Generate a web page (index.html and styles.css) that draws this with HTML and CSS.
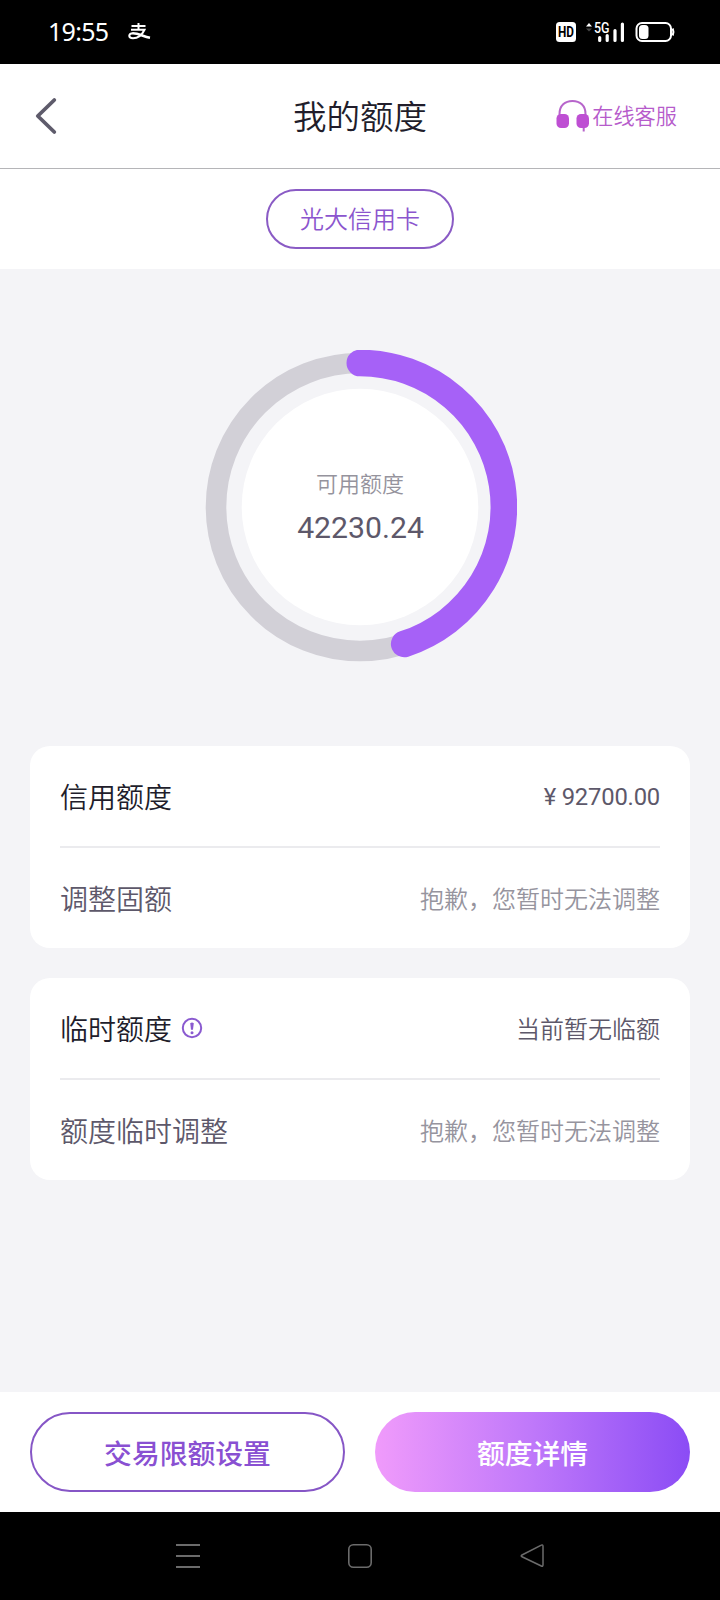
FILE: index.html
```html
<!DOCTYPE html>
<html lang="zh-CN">
<head>
<meta charset="utf-8">
<title>我的额度</title>
<link rel="stylesheet" href="styles.css">
</head>
<body>
<div class="status">
  <span class="time">19:55</span>
  <svg class="pay" width="24" height="20" viewBox="0 0 24 20" fill="none" stroke="#fff"><path stroke-width="2" d="M3.500 4H17.500M10.500 1V7.500M3 7.800H16.500C14.500 12 11 16.300 5 16.300C0 16.300 0 11.500 5 11.200"/><path stroke-width="2.600" d="M4.500 11.300C10 11 15 14.400 22 15.800"/></svg>
  <svg class="indicators" width="120" height="24" viewBox="0 0 120 24">
    <rect x="0" y="2" width="20" height="20" rx="3.500" fill="#fff"/>
    <text class="hd" x="2" y="17.300" textLength="16" lengthAdjust="spacingAndGlyphs">HD</text>
    <path d="M30 6.500l3-3.500 3 3.500z" fill="#fff"/><path d="M30 8.500l3 3 3-3z" fill="#444"/>
    <path d="M43.700 17.500v3M51.200 15.500v5M59 10.500v10M66.400 4v16.500" stroke="#fff" stroke-width="3.200" stroke-linecap="round"/>
    <text class="net" x="38" y="13" textLength="15.500" lengthAdjust="spacingAndGlyphs">5G</text>
    <rect x="80.500" y="3" width="34.500" height="18" rx="5.500" fill="none" stroke="#fff" stroke-width="2"/>
    <rect x="83" y="5" width="9.500" height="14" rx="3.500" fill="#fff"/>
    <path d="M116.700 8.500q1.500 3.500 0 7" fill="none" stroke="#fff" stroke-width="2"/>
  </svg>
</div>
<header class="header">
  <svg class="back" width="24" height="40" viewBox="0 0 24 40" fill="none" stroke="#5e5b6b" stroke-width="3.800" stroke-linecap="round" stroke-linejoin="round"><path d="M20.300 4L3.800 20L20.300 36"/></svg>
  <h1 class="title">我的额度</h1>
  <div class="service">
    <svg width="34" height="34" viewBox="0 0 34 34"><path d="M3.500 16V15C3.500 6.500 9 2 16.500 2S29.500 6.500 29.500 15V16M27.700 28V32.500" fill="none" stroke="#b765cb" stroke-width="2"/><rect x="0.500" y="15" width="12.500" height="14" rx="4.500" fill="#be4fd3"/><rect x="20.500" y="15" width="12.500" height="14" rx="4.500" fill="#be4fd3"/></svg>
    <span class="service-text">在线客服</span>
  </div>
</header>
<div class="tabs"><div class="tab">光大信用卡</div></div>
<main class="main">
  <div class="gauge">
    <svg class="ring" width="314" height="314" viewBox="203 350 314 314" fill="none">
      <circle cx="360" cy="507" r="144" stroke="#d2d0d7" stroke-width="20.600"/>
      <path d="M359.800 363A144 144 0 0 1 404.200 644" stroke="#a661f7" stroke-width="26.600" stroke-linecap="round"/>
      <circle cx="360" cy="507" r="118.300" fill="#fff"/>
    </svg>
    <div class="amount"><span class="caption">可用额度</span><span class="number">42230.24</span></div>
  </div>
  <section class="card">
    <div class="row"><span class="label strong">信用额度</span><span class="value money">¥ 92700.00</span></div>
    <div class="row second"><span class="label">调整固额</span><span class="value muted">抱歉，您暂时无法调整</span></div>
  </section>
  <section class="card">
    <div class="row"><span class="label strong">临时额度</span><svg class="info" width="22" height="22" viewBox="0 0 22 22"><circle cx="11" cy="11" r="9.200" fill="none" stroke="#8a5ad0" stroke-width="2"/><path d="M9.200 6.300Q11 4.800 12.800 6.300L12 12.800H10Z" fill="#8a5ad0"/><circle cx="11" cy="15.700" r="1.500" fill="#8a5ad0"/></svg><span class="value">当前暂无临额</span></div>
    <div class="row second"><span class="label">额度临时调整</span><span class="value muted">抱歉，您暂时无法调整</span></div>
  </section>
</main>
<footer class="actions">
  <div class="btn outline">交易限额设置</div>
  <div class="btn filled">额度详情</div>
</footer>
<nav class="nav">
  <svg width="24" height="24" viewBox="0 0 24 24" stroke="#6b6b6b" stroke-width="2"><path d="M0 1H24M0 12H24M0 23H24"/></svg>
  <svg width="24" height="24" viewBox="0 0 24 24" fill="none" stroke="#6b6b6b" stroke-width="1.600"><rect x=".8" y=".8" width="22.400" height="22.400" rx="4.500"/></svg>
  <svg width="24" height="24" viewBox="0 0 24 24" fill="none" stroke="#6b6b6b" stroke-width="1.500"><path d="M21.300 1.200Q23 .2 23 2.500V20.500Q23 23 21.300 22L2 12.800Q.4 12 2 11Z"/></svg>
</nav>
</body>
</html>
```
FILE: styles.css
```css
* { box-sizing: border-box; }
body {
  margin: 0;
  width: 720px;
  height: 1600px;
  display: flex;
  flex-direction: column;
  overflow: hidden;
  background: #f4f4f7;
  color: #5d586a;
  font-family: Roboto, "Noto Sans CJK SC", sans-serif;
  font-weight: 350;
}
svg { display: block; flex: none; }
.status {
  height: 64px;
  background: #000;
  color: #fff;
  display: flex;
  align-items: center;
  padding: 0 44px 0 48px;
}
.time { font-family: "Noto Sans", sans-serif; font-size: 25px; font-weight: 400; width: 80px; letter-spacing: -0.7px; padding-bottom: 2px; }
.indicators { margin-left: auto; }
.hd { font: 700 15px Roboto, sans-serif; fill: #000; }
.net { font: 500 14px Roboto, sans-serif; fill: #fff; stroke: #000; stroke-width: 1.5px; paint-order: stroke; }
.header {
  height: 105px;
  background: #fff;
  border-bottom: 1px solid #b5b5b8;
  display: grid;
  grid-template-columns: 1fr auto 1fr;
  align-items: center;
  padding: 0 43px 0 34px;
}
.title { margin: 0; padding: 4px 0 0 9px; font-size: 33.5px; font-weight: 350; color: #211d2b; line-height: 50px; }
.service {
  display: flex;
  align-items: center;
  justify-content: flex-end;
  gap: 2px;
  font-size: 21.2px;
  color: #b65bcb;
}
.service-text { padding-bottom: 3px; }
.tabs { height: 100px; background: #fff; display: flex; justify-content: center; align-items: center; }
.tab {
  width: 188px;
  height: 60px;
  border: 2px solid #8a5bc5;
  border-radius: 30px;
  color: #8b55ce;
  font-size: 24px;
  line-height: 59px;
  text-align: center;
}
.main { flex: 1; padding: 81px 30px 0; display: flex; flex-direction: column; }
.gauge { width: 314px; height: 314px; margin: 0 auto 82px; display: grid; place-items: center; }
.ring, .amount { grid-area: 1 / 1; }
.amount { display: flex; flex-direction: column; align-items: center; }
.caption { font-size: 22px; line-height: 32px; color: #95939d; }
.number { font-size: 30.2px; font-weight: 400; line-height: 36px; margin: 9px 0 0 1px; }
.card { height: 202px; padding: 0 30px; border-radius: 20px; background: #fff; margin-bottom: 30px; }
.row { height: 100px; display: flex; align-items: center; }
.second { height: 102px; border-top: 2px solid #ebebee; }
.label { font-size: 28px; line-height: 40px; padding-top: 6px; }
.strong { color: #211d2b; }
.value { margin-left: auto; font-size: 24px; padding-bottom: 2px; }
.money { font-size: 23.8px; font-weight: 400; letter-spacing: -0.2px; padding: 2px 0 0; }
.muted { color: #96949e; }
.info { margin-left: 9px; }
.actions { height: 120px; background: #fff; display: grid; grid-template-columns: 1fr 1fr; gap: 30px; padding: 20px 30px; }
.btn { height: 80px; border-radius: 40px; font-size: 27.8px; font-weight: 500; text-align: center; line-height: 86px; }
.outline { border: 2px solid #8656c6; color: #8950d2; line-height: 82px; }
.filled { color: #fff; background: linear-gradient(90deg, #f09bfb, #bf78fa 50%, #8b4cf5); }
.nav { height: 88px; background: #000; display: flex; justify-content: space-between; align-items: center; padding: 0 176px; }
```
